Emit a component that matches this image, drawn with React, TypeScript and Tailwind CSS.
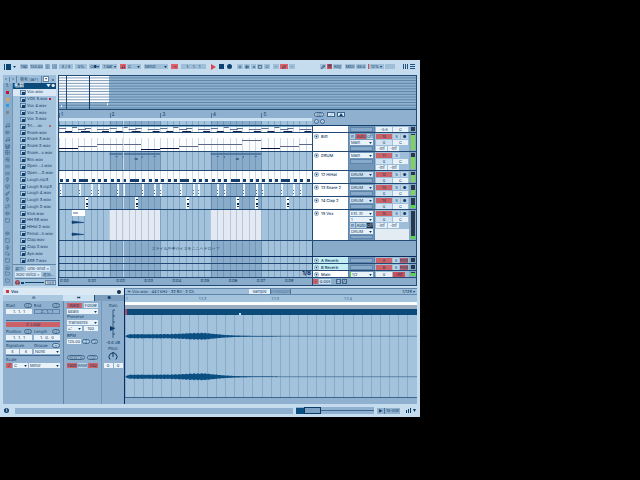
import type { ReactNode } from 'react';
import {
  AudioLines,
  Box,
  ChevronsLeft,
  Cloud,
  Drum,
  Folder,
  Grid2x2,
  Guitar,
  Headphones,
  Home,
  Mic,
  Music,
  Pencil,
  Plug,
  Plus,
  Repeat,
  SlidersHorizontal,
  Square,
  Waves,
} from 'lucide-react';
import clsx from 'clsx';
import { twMerge } from 'tailwind-merge';

const FILES = [
  'Vox.wav',
  'VOX 5.wav',
  'Vox 4.wav',
  'Vox 2.wav',
  'Vox 3.wav',
  'Tri... .av',
  'Snare.wav',
  'Snare 3.wav',
  'Snare 2.wav',
  'Snare...v.wav',
  'Rim.wav',
  'Open ...t.wav',
  'Open ...2.wav',
  'Laugh.mp3',
  'Laugh 5.mp3',
  'Laugh 4.wav',
  'Laugh 3.wav',
  'Laugh 2.wav',
  'Kick.wav',
  'HH SE.wav',
  'HiHat 2.wav',
  'Femal...h.wav',
  'Clap.wav',
  'Clap 2.wav',
  'Aye.wav',
  'ASE 7.wav',
];

const TAGS = ['bg-[#c8143c]', 'bg-[#e0a552]', 'bg-[#2f9bea]', 'bg-[#7c8794]'];

const RAIL_ICONS = [
  Music,
  AudioLines,
  Music,
  Drum,
  Grid2x2,
  SlidersHorizontal,
  Waves,
  Waves,
  Plug,
  Box,
  Guitar,
  Plug,
  Repeat,
  AudioLines,
  Square,
  null,
  AudioLines,
  Square,
  Mic,
  Cloud,
  Square,
  Home,
  Folder,
  Folder,
];

const BAR = 50.6;

const MELODY = [
  [0, 19, 15],
  [19, 19, 13],
  [38, 44, 11],
  [82, 19, 16],
  [101, 19, 15],
  [120, 19, 13],
  [139, 44, 11],
  [183, 19, 7],
  [202, 19, 15],
  [221, 19, 13],
  [240, 13, 11],
];

const CHORDS = [
  [0, 7, 2],
  [6, 7, 5],
  [13, 5, 1],
  [19, 8, 3],
  [22, 9, 5],
  [26, 6, 2],
  [38, 12, 3],
  [43, 7, 5],
];

const SNARES = [1, 20, 32, 39, 58, 64, 83, 95, 101, 121, 134, 139, 158, 165, 184, 197, 203, 222, 234, 241];
const CLAPS = [26, 76, 127, 177, 196, 227];

function Btn({ children, className, label }: { children?: ReactNode; className?: string; label?: string }) {
  return (
    <button
      type="button"
      aria-label={label}
      className={twMerge('flex h-[5px] min-w-0 items-center justify-center overflow-hidden whitespace-nowrap leading-none', className)}
    >
      {children}
    </button>
  );
}

function Pick({ value, label, className }: { value: string; label: string; className?: string }) {
  return (
    <div className={clsx('flex h-[5px] min-w-0 items-center pr-px', className)}>
      <select aria-label={label} className="h-[5px] min-w-0 flex-1 appearance-none pl-px leading-none outline-none">
        <option>{value}</option>
      </select>
      <svg viewBox="0 0 4 3" className="h-[2px] w-[3px] shrink-0" aria-hidden="true">
        <path d="M0 0h4L2 3z" fill="#0b3a66" />
      </svg>
    </div>
  );
}

function Field({ value, label, className }: { value: string; label: string; className?: string }) {
  return (
    <input
      aria-label={label}
      defaultValue={value}
      className={twMerge('h-[5px] min-w-0 bg-[#e9f2f9] text-center leading-none outline-none', className)}
    />
  );
}

function Lane({
  height,
  white,
  shade,
  children,
}: {
  height: number;
  white?: boolean;
  shade?: boolean;
  children?: ReactNode;
}) {
  return (
    <svg
      viewBox={`0 0 253 ${height}`}
      preserveAspectRatio="none"
      className={clsx('h-full w-full', white ? 'bg-[#fbfdff]' : 'bg-[#a3c2dc]')}
      aria-hidden="true"
    >
      {shade && (
        <>
          <rect x={BAR} width={BAR} height={height} fill="#8aaccb" />
          <rect x={BAR * 3} width={BAR} height={height} fill="#8aaccb" />
        </>
      )}
      {Array.from({ length: 40 }, (_, i) => (
        <rect
          key={i}
          x={Math.round((i * BAR) / 8)}
          width="1"
          height={height}
          fill="#4f7599"
          opacity={white ? 0.25 : i % 8 === 0 ? 0.6 : 0.4}
        />
      ))}
      {children}
      <rect x="64" width="1" height={height} fill="#d5e4f0" opacity="0.8" />
    </svg>
  );
}

function Toggle() {
  return (
    <svg viewBox="0 0 6 6" className="mt-px h-[5px] w-[5px] shrink-0" aria-hidden="true">
      <circle cx="3" cy="3" r="2.6" fill="#e3eff8" stroke="#4c7397" strokeWidth="0.6" />
      <path d="M1.6 2.2h2.8L3 4.4z" fill="#0b3a66" />
    </svg>
  );
}

function Track({
  name,
  height,
  lane,
  nameClass = 'bg-white',
  io,
  mix,
  level,
}: {
  name: string;
  height: string;
  lane: ReactNode;
  nameClass?: string;
  io: ReactNode;
  mix: ReactNode;
  level?: string;
}) {
  return (
    <div className={clsx('grid grid-cols-[1fr_36px_26px_35px_7px] border-b border-[#234a75]', height)}>
      <div className="min-h-0 overflow-hidden">{lane}</div>
      <div className={clsx('flex items-start gap-[2px] overflow-hidden border-l border-[#234a75] pl-px font-medium leading-[7px]', nameClass)}>
        {name && <Toggle />}
        <span className="whitespace-nowrap">{name}</span>
      </div>
      <div className="flex flex-col gap-px overflow-hidden border-l border-[#5f86aa] bg-[#7397b8] px-px pt-px">{io}</div>
      <div className="flex flex-col gap-px overflow-hidden border-l border-[#5f86aa] bg-[#9dbdd8] px-px pt-px">{mix}</div>
      <div className="flex justify-center bg-[#86a8c6] py-px">
        <div className="flex w-[4px] flex-col justify-end bg-[#26384a]">{level && <div className={level} />}</div>
      </div>
    </div>
  );
}

const blank = <div className="h-[5px] shrink-0 border border-[#5f86aa] bg-[#88aaca]" />;

function MixRows({ num, solo = true, rows = 2 }: { num: string; solo?: boolean; rows?: number }) {
  return (
    <>
      <div className="flex gap-px">
        <Btn className="w-[16px] bg-[#cd6168]">{num}</Btn>
        <Btn className="flex-1 bg-[#b9d3e8]">S</Btn>
        {solo ? <Btn className="flex-1 bg-[#b9d3e8]">●</Btn> : <div className="flex-1" />}
      </div>
      <div className="flex gap-px">
        <Field label={`Track ${num} volume`} value="0" className="w-[16px] bg-[#cfe2f1]" />
        <Field label={`Track ${num} pan`} value="C" className="flex-1" />
      </div>
      {rows > 2 && (
        <div className="flex gap-px">
          <Field label={`Track ${num} send A`} value="-inf" className="w-[11px]" />
          <Field label={`Track ${num} send B`} value="-inf" className="w-[11px]" />
        </div>
      )}
    </>
  );
}

function Toolbar() {
  const chip = 'bg-[#9fbfd9]';
  return (
    <header className="flex h-[14px] items-center pb-px pl-[4px] pr-[5px] text-[4px]">
      <svg viewBox="0 0 12 6" className="mr-[4px] h-[6px] w-[12px]" aria-hidden="true">
        <path d="M0 0h1v6H0zM2 0h5v6H2zM9 2h3l-1.500 2z" fill="#0b4373" />
      </svg>
      <div className="flex gap-[2px]">
        <Btn className={clsx('w-[8px]', chip)}>Tap</Btn>
        <Btn className={clsx('w-[13px]', chip)}>134.00</Btn>
        <Btn className={clsx('w-[5px]', chip)}>|||</Btn>
        <Btn className={clsx('w-[5px]', chip)}>||||</Btn>
        <Btn className={clsx('w-[14px]', chip)}>4 / 4</Btn>
        <Btn className={clsx('w-[12px]', chip)}>0%</Btn>
        <Btn className={clsx('w-[11px]', chip)}>O●▾</Btn>
        <Btn className={clsx('w-[15px]', chip)}>1 Bar ▾</Btn>
      </div>
      <div className="ml-[3px] flex">
        <Btn label="Scale" className="w-[6px] bg-[#e06068]">
          <Music size={4} />
        </Btn>
        <Pick label="Root note" value="C" className={clsx('ml-px w-[14px]', chip)} />
        <Pick label="Scale name" value="Minor" className={clsx('ml-[3px] w-[24px]', chip)} />
        <Btn label="Follow" className="ml-[3px] w-[7px] bg-[#e06068]">
          ⇥
        </Btn>
        <Field label="Song position" value="1.   1.   1" className="ml-[3px] w-[25px] bg-[#9fbfd9]" />
      </div>
      <div className="ml-[5px] flex items-center gap-[3px]">
        <button type="button" aria-label="Play">
          <svg viewBox="0 0 5 6" className="block h-[6px] w-[5px]">
            <path d="M0 0l5 3-5 3z" fill="#dd4650" />
          </svg>
        </button>
        <button type="button" aria-label="Stop" className="h-[5px] w-[5px] bg-[#0b4373]" />
        <button type="button" aria-label="Record" className="h-[5px] w-[5px] rounded-full bg-[#0b4373]" />
      </div>
      <div className="ml-[5px] flex gap-px">
        <Btn label="Overdub" className={clsx('w-[6px]', chip)}><Plus size={4} strokeWidth={3} /></Btn>
        <Btn label="Automation arm" className={clsx('w-[6px]', chip)}><AudioLines size={4} strokeWidth={3} /></Btn>
        <Btn label="Re-enable" className={clsx('w-[5px]', chip)}><ChevronsLeft size={4} strokeWidth={3} /></Btn>
        <Btn label="Capture" className={clsx('w-[6px]', chip)}><Square size={4} strokeWidth={3} /></Btn>
        <Btn label="Session record" className={clsx('w-[6px]', chip)}>○</Btn>
        <Btn label="Punch in" className={clsx('ml-[2px] w-[6px]', chip)}>⌐</Btn>
        <Btn label="Loop" className="w-[8px] bg-[#e06068]"><Repeat size={4} strokeWidth={3} /></Btn>
        <Btn label="Punch out" className={clsx('w-[6px]', chip)}>¬</Btn>
      </div>
      <div className="ml-auto flex items-center gap-px">
        <Btn label="Draw mode" className={clsx('w-[6px]', chip)}><Pencil size={4} strokeWidth={4} /></Btn>
        <Btn label="Computer keyboard" className="w-[5px] bg-[#d0525f]">▦</Btn>
        <Btn className={clsx('w-[9px]', chip)}>Key</Btn>
        <Btn className={clsx('ml-[2px] w-[10px]', chip)}>MIDI</Btn>
        <Btn className={clsx('w-[10px]', chip)}>48.0</Btn>
        <Btn className={clsx('ml-px w-[16px] border-l border-[#dd4650]', chip)}>12% ▾</Btn>
        <Btn label="Disk overload" className={clsx('w-[10px]', chip)} />
        <svg viewBox="0 0 12 5" className="ml-[7px] h-[5px] w-[12px]" aria-hidden="true">
          <path d="M.5 0v5M2.500 0v5M4.500 0v5M7 .5h5M7 2.500h5M7 4.500h5" stroke="#0b4373" strokeWidth="0.9" />
        </svg>
      </div>
    </header>
  );
}

function Browser() {
  return (
    <aside className="flex flex-col bg-[#a3c2dc]">
      <div className="flex h-[8px] items-center bg-[#9dbdd8] text-[5px]">
        <Btn label="Back" className="w-[6px]">‹</Btn>
        <Btn label="Forward" className="w-[7px] border-l border-[#5f86aa]">›</Btn>
        <input
          aria-label="検索"
          placeholder="検索 (⌘F)"
          className="h-[7px] min-w-0 flex-1 border-x border-[#5f86aa] pl-[3px] text-[4px] leading-none placeholder:text-[#2b557f]"
        />
        <Btn label="Filter" className="mx-px h-[6px] w-[6px] border border-[#5f86aa] bg-white text-[4px]">▾</Btn>
        <Btn className="w-[6px]">×</Btn>
      </div>
      <div className="flex flex-1">
        <nav className="w-[10px] border-r border-[#7396b7] bg-[#8aaccb]">
          <div className="h-[6px] text-center text-[5px] leading-[6px]">1.</div>
          <div className="grid h-[195px] auto-rows-fr">
            {TAGS.map((tag) => (
              <button key={tag} type="button" aria-label="Collection" className="grid place-items-center">
                <span className={clsx('h-[3px] w-[3px]', tag)} />
              </button>
            ))}
            <span />
            {RAIL_ICONS.map((Icon, i) => (
              <button key={i} type="button" aria-label={`Category ${i + 1}`} className="grid place-items-center text-[#2b557f]">
                {Icon && <Icon size={5} strokeWidth={2} />}
              </button>
            ))}
          </div>
        </nav>
        <div className="min-w-0 flex-1">
          <div className="flex h-[6px] items-center justify-between bg-[#0b4a79] px-px text-[5px] font-bold text-[#e9f2f9]">
            <span>名前</span>
            <span className="text-[4px]">▼ ●</span>
          </div>
          <ul className="grid h-[175px] auto-rows-fr">
            {FILES.map((file, i) => (
              <li
                key={file}
                className={clsx('flex items-center gap-px overflow-hidden pl-[7px] text-[4px]', i === 0 && 'bg-[#d9e8f4]')}
              >
                <svg viewBox="0 0 6 5" className="h-[5px] w-[6px] shrink-0" aria-hidden="true">
                  <rect x="0.400" y="0.400" width="5.200" height="4" fill="#b9d1e6" stroke="#36638f" strokeWidth="0.700" />
                  <path d="M2 2h3v3H2z" fill="#123f6b" />
                </svg>
                <span className="flex-1 whitespace-nowrap">{file}</span>
                {(i === 1 || i === 5) && (
                  <span className={clsx('mr-[5px] h-[2px] w-[2px]', i === 1 ? 'bg-[#c8143c]' : 'bg-[#a3707f]')} />
                )}
              </li>
            ))}
          </ul>
          <div className="flex flex-col gap-px border-t border-[#5f86aa] pl-[2px] pt-px text-[4px]">
            <div className="flex items-center gap-[2px]">
              <span>並び:</span>
              <Btn className="bg-[#d9e8f4] px-px">One-Shot ×</Btn>
            </div>
            <div className="flex items-center gap-[2px]">
              <Btn className="bg-[#d9e8f4] px-px">Solo Voice ×</Btn>
              <span className="whitespace-nowrap">追加...</span>
            </div>
            <div className="flex items-center gap-px border-t border-[#5f86aa] pt-px">
              <Headphones size={5} className="shrink-0 rounded-full bg-[#cd6168]" />
              <span className="h-[2px] w-[3px] bg-[#0b4373]" />
              <span className="h-px flex-1 bg-[#0b4373]" />
              <Btn className="w-[11px] border border-[#5f86aa] bg-[#e9f2f9]">Raw</Btn>
            </div>
          </div>
        </div>
      </div>
    </aside>
  );
}

function Overview() {
  return (
    <svg viewBox="0 0 357 35" preserveAspectRatio="none" className="h-[35px] w-full border-y border-[#234a75] bg-[#8fb2cf]" aria-hidden="true">
      <rect width="50" height="28" fill="#fbfdff" />
      {Array.from({ length: 12 }, (_, i) => (
        <rect key={i} y={i * 2.900 + 1.500} width="357" height="1" fill="#466e95" opacity="0.7" />
      ))}
      <rect x="7" width="1" height="35" fill="#234a75" />
      <rect x="30" width="1" height="35" fill="#12396a" />
      <rect x="2" y="31" width="1" height="2" fill="#fff" />
      <rect x="48" y="29" width="1" height="2" fill="#fff" />
    </svg>
  );
}

function Ruler() {
  return (
    <div className="grid grid-cols-[1fr_104px] border-b border-[#123f6b] bg-[#8fb0ce] text-[5px]">
      <div>
        <div className="grid h-[8px] grid-cols-5 items-end">
          {[1, 2, 3, 4, 5].map((n) => (
            <span key={n} className="border-l border-[#4f7599] pl-px leading-none">{n}</span>
          ))}
        </div>
        <div className="h-[3px] bg-[#c9e1f2]" />
        <div className="h-[4px]">
          <Lane height={4} shade />
        </div>
      </div>
      <div className="flex flex-col gap-[2px] pl-[2px] pt-[2px] text-[4px]">
        <div className="flex gap-[3px]">
          <Btn className="w-[10px] rounded-full border border-[#3d678f] bg-[#c9deee]">Set</Btn>
          <Btn label="Automation mode" className="w-[8px] border border-[#3d678f] bg-[#d9e8f4]">⟋</Btn>
          <Btn label="Lock envelopes" className="-ml-px w-[8px] border border-[#3d678f] bg-[#d9e8f4]">▲</Btn>
        </div>
        <div className="flex gap-px">
          <Btn label="Previous locator" className="w-[5px] rounded-full border border-[#3d678f] bg-[#c9deee]">‹</Btn>
          <Btn label="Next locator" className="w-[5px] rounded-full border border-[#3d678f] bg-[#c9deee]">›</Btn>
        </div>
      </div>
    </div>
  );
}

function ReturnMix({ letter }: { letter: string }) {
  return (
    <div className="flex gap-px">
      <Btn className="w-[16px] bg-[#cd6168]">{letter}</Btn>
      <Btn className="w-[6px] bg-[#b9d3e8]">S</Btn>
      <Btn className="flex-1 bg-[#b8636f]">Post</Btn>
    </div>
  );
}

function Arrangement() {
  return (
    <main className="flex min-w-0 flex-col border-x border-b border-[#234a75] bg-[#8fb0ce] text-[4px]">
      <Overview />
      <Ruler />
      <Track
        name=""
        height="h-[7px]"
        io={blank}
        mix={
          <div className="flex gap-px">
            <Field label="Volume" value="-5.6" className="w-[16px]" />
            <Field label="Pan" value="C" className="flex-1" />
          </div>
        }
        lane={
          <Lane height={6} white>
            <rect width="253" height="1" fill="#7fb1d0" />
            {[0, 1, 2, 3, 4].map((bar) =>
              CHORDS.map(([x, w, y]) => (
                <rect key={`${bar}-${x}`} x={bar * BAR + x} y={y} width={w} height="1" fill={y > 4 ? '#10204f' : '#5f6f8d'} />
              )),
            )}
          </Lane>
        }
      />
      <Track
        name="BIG"
        height="h-[19px]"
        level="h-[15px] bg-[#7fd35b]"
        io={
          <>
            <div className="flex gap-px">
              <Btn className="w-[5px] bg-[#b9d3e8]">In</Btn>
              <Btn className="flex-1 bg-[#cd6168]">Auto</Btn>
              <Btn className="w-[6px] bg-[#b9d3e8]">Off</Btn>
            </div>
            <Pick label="BIG output" value="Main" className="bg-[#e9f2f9]" />
            {blank}
          </>
        }
        mix={<MixRows num="10" rows={3} />}
        lane={
          <Lane height={18} white>
            <rect width="253" height="5" fill="#fff" />
            {MELODY.map(([x, w, y]) => (
              <rect key={x} x={x} y={y} width={w} height="1" fill={y > 14 ? '#0a1440' : '#5c6885'} />
            ))}
          </Lane>
        }
      />
      <Track
        name="DRUM"
        height="h-[19px]"
        level="h-[12px] bg-[#7fd35b]"
        io={
          <>
            <Pick label="DRUM output" value="Main" className="bg-[#e9f2f9]" />
            {blank}
          </>
        }
        mix={<MixRows num="11" solo={false} rows={3} />}
        lane={
          <Lane height={18} shade>
            {[1, 3].map((bar) => (
              <g key={bar} fill="#3f6b93">
                <rect x={bar * BAR} y="1" width={BAR} height="2" opacity="0.700" />
                <path d={`M${bar * BAR + 6} 4h2v1h-2zM${bar * BAR + 13} 4h1v2h-1zM${bar * BAR + 25} 6h3v2h-3zM${bar * BAR + 32} 4h1v2h-1zM${bar * BAR + 44} 4h2v1h-2z`} />
              </g>
            ))}
          </Lane>
        }
      />
      <Track
        name="12 HiHat"
        height="h-[13px]"
        level="h-[7px] bg-[#7fd35b]"
        io={
          <>
            <Pick label="HiHat output" value="DRUM" className="bg-[#cfe0ee]" />
            {blank}
          </>
        }
        mix={<MixRows num="12" />}
        lane={
          <Lane height={12} white>
            {Array.from({ length: 40 }, (_, i) =>
              i % 8 === 4 ? null : (
                <rect key={i} x={Math.round((i * BAR) / 8) + 1} y="8" width={i % 8 === 3 ? 9 : 3} height="3" fill="#143f6c" />
              ),
            )}
          </Lane>
        }
      />
      <Track
        name="13 Snare 2"
        height="h-[13px]"
        level="h-[5px] bg-[#7fd35b]"
        io={
          <>
            <Pick label="Snare output" value="DRUM" className="bg-[#cfe0ee]" />
            {blank}
          </>
        }
        mix={<MixRows num="13" />}
        lane={
          <Lane height={12} shade>
            {SNARES.map((x) => (
              <g key={x}>
                <rect x={x} width="2" height="12" fill="#eef5fa" />
                <path d={`M${x} 6h1v1h-1zM${x} 9h1v1h-1z`} fill="#3f6b93" />
              </g>
            ))}
          </Lane>
        }
      />
      <Track
        name="14 Clap 2"
        height="h-[13px]"
        level="h-[3px] bg-[#4fdc3b]"
        io={
          <>
            <Pick label="Clap output" value="DRUM" className="bg-[#cfe0ee]" />
            {blank}
          </>
        }
        mix={<MixRows num="14" />}
        lane={
          <Lane height={12} shade>
            {CLAPS.map((x) => (
              <g key={x}>
                <rect x={x} width="3" height="12" fill="#fbfdff" />
                <path d={`M${x + 1} 2h2v1h-2zM${x + 1} 6h2v2h-2zM${x + 1} 9h2v1h-2z`} fill="#0b2c52" />
              </g>
            ))}
          </Lane>
        }
      />
      <Track
        name="15 Vox"
        height="h-[31px]"
        level="h-[3px] bg-[#4fdc3b]"
        io={
          <>
            <Pick label="Vox input" value="Ext. In" className="bg-[#e9f2f9]" />
            <Pick label="Vox channel" value="1" className="bg-[#e9f2f9]" />
            <div className="flex gap-px">
              <Btn className="w-[5px] bg-[#b9d3e8]">In</Btn>
              <Btn className="flex-1 bg-[#b9d3e8]">Auto</Btn>
              <Btn className="w-[6px] bg-[#1e2c3c] text-[#b9d3e8]">Off</Btn>
            </div>
            <Pick label="Vox output" value="DRUM" className="bg-[#e9f2f9]" />
            <div className="h-[4px] border border-[#5f86aa] bg-[#88aaca]" />
          </>
        }
        mix={
          <>
            <MixRows num="15" rows={3} />
            <div className="-mx-px flex-1 bg-[#e3ebf3]" />
          </>
        }
        lane={
          <Lane height={30} shade>
            {[1, 3].map((bar) => (
              <g key={bar}>
                <rect x={bar * BAR} width={BAR} height="30" fill="#e3eaf3" />
                {[1, 2, 3, 4, 5, 6, 7].map((i) => (
                  <rect key={i} x={Math.round(bar * BAR + (i * BAR) / 8)} width="1" height="30" fill="#b9c7d8" />
                ))}
              </g>
            ))}
            <rect x="13" width="13" height="6" fill="#fff" />
            <path d="M14 3h5" stroke="#4c7397" />
            <path d="M13 11l4 .5 8 1-8 .5-4 .5zM13 23l4 .5 8 1-8 .5-4 .5z" fill="#0b3f72" stroke="#0b3f72" strokeWidth="0.500" />
          </Lane>
        }
      />
      <div className="grid h-[16px] grid-cols-[1fr_104px] border-b border-[#0b2c62]">
        <div className="relative">
          <Lane height={15} shade />
          <span className="absolute inset-0 flex items-center justify-center text-[4px]">
            ファイルやデバイスをここへドロップ
          </span>
        </div>
        <div className="border-l border-[#234a75] bg-[#8aaccb]" />
      </div>
      <Track
        name="A Reverb"
        height="h-[7px]"
        nameClass="bg-[#c3eef3]"
        io={blank}
        mix={<ReturnMix letter="A" />}
        lane={<Lane height={6} shade />}
      />
      <Track
        name="B Reverb"
        height="h-[7px]"
        nameClass="bg-[#c3eef3]"
        io={blank}
        mix={<ReturnMix letter="B" />}
        lane={<Lane height={6} shade />}
      />
      <Track
        name="Main"
        height="h-[7px]"
        level="h-[3px] bg-[#4fdc3b]"
        io={<Pick label="Main output" value="1/2" className="border-l border-[#4fdc3b] bg-[#e9f2f9]" />}
        mix={
          <div className="flex gap-px">
            <Field label="Main pan" value="0" className="w-[16px]" />
            <Btn className="w-[12px] bg-[#cd4f58]">-inf</Btn>
          </div>
        }
        lane={
          <div className="relative h-full">
            <Lane height={6} shade />
            <span className="absolute bottom-0 right-px text-[6px] font-bold leading-[6px] text-[#0a1f5c]">1/8</span>
          </div>
        }
      />
      <div className="grid h-[7px] grid-cols-[1fr_104px] bg-[#8aaccb]">
        <div className="grid grid-cols-9 text-[4px] leading-[6px]">
          {[0, 1, 2, 3, 4, 5, 6, 7, 8].map((s) => (
            <span key={s} className="pl-px">0:0{s}</span>
          ))}
        </div>
        <div className="flex items-center gap-px border-l border-[#234a75]">
          <Btn label="Arrangement follow" className="w-[5px] bg-[#cd6168]">◦</Btn>
          <Btn className="w-[12px] bg-[#c9deee]">0.00s</Btn>
          <Btn className="ml-[4px] w-[5px] border border-[#3d678f] bg-[#c9deee]">H</Btn>
          <Btn className="w-[5px] border border-[#3d678f] bg-[#c9deee]">W</Btn>
        </div>
      </div>
    </main>
  );
}

function Pair({ left, right }: { left: string; right: string }) {
  return (
    <div className="grid grid-cols-2 gap-[2px]">
      {[left, right].map((text) => (
        <div key={text} className="flex items-center justify-between">
          <span>{text}</span>
          <Btn className="w-[8px] rounded-full border border-[#3d678f] bg-[#b9d3e8]">Set</Btn>
        </div>
      ))}
    </div>
  );
}

function ClipPanel() {
  return (
    <section className="flex flex-col bg-[#8fb0ce] text-[4px]">
      <div className="flex h-[7px] items-center gap-[2px] bg-[#dbe9f4] px-[3px]">
        <span className="h-[3px] w-[3px] bg-[#d4353f]" />
        <span className="flex-1 font-semibold">Vox</span>
        <span className="h-[4px] w-[4px] rounded-full bg-[#12304f]" />
      </div>
      <div className="grid h-[6px] grid-cols-[60px_31px_1fr]">
        <Btn label="Clip tab" className="h-full bg-[#a9c8e0]">⊟</Btn>
        <Btn label="Sample tab" className="h-full bg-[#cfe2f1]">↦</Btn>
        <Btn label="Automation tab" className="h-full border-l border-[#234a75] bg-[#7d9fbf]">●.</Btn>
      </div>
      <div className="grid flex-1 grid-cols-[61px_37px_1fr]">
        <div className="flex flex-col gap-px border-r border-[#5f86aa] pl-[3px] pr-[3px] pt-[2px]">
          <Pair left="Start" right="End" />
          <div className="grid grid-cols-2 gap-[2px]">
            <Field label="Start" value="1.  1.  1" />
            <Field label="End" value="2.  1.  1" className="border border-[#5f86aa] bg-[#8fb0ce]" />
          </div>
          <hr className="mt-[5px] border-[#3d678f]" />
          <Btn className="bg-[#cd6168]">↻ Loop</Btn>
          <div className="mt-px">
            <Pair left="Position" right="Length" />
          </div>
          <div className="grid grid-cols-2 gap-[2px]">
            <Field label="Position" value="1.  1.  1" />
            <Field label="Length" value="1.  0.  0" />
          </div>
          <hr className="border-[#3d678f]" />
          <div className="grid grid-cols-2 gap-[2px]">
            <span className="leading-[5px]">Signature</span>
            <div className="flex items-center justify-between">
              <span>Groove</span>
              <Btn label="Commit groove" className="w-[8px] rounded-full border border-[#3d678f] bg-[#b9d3e8]">‹›</Btn>
            </div>
          </div>
          <div className="grid grid-cols-2 gap-[2px]">
            <div className="flex gap-px">
              <Field label="Numerator" value="4" className="flex-1" />
              <Field label="Denominator" value="4" className="flex-1" />
            </div>
            <Pick label="Groove" value="None" className="bg-[#e9f2f9]" />
          </div>
          <hr className="border-[#3d678f]" />
          <span className="leading-[5px]">Scale</span>
          <div className="flex gap-px">
            <Btn label="Scale" className="w-[6px] bg-[#cd6168]">♪</Btn>
            <Pick label="Root" value="C" className="w-[15px] bg-[#e9f2f9]" />
            <Pick label="Mode" value="Minor" className="flex-1 bg-[#e9f2f9]" />
          </div>
        </div>
        <div className="flex flex-col gap-px pl-[3px] pr-[3px] pt-[2px]">
          <div className="grid grid-cols-2 gap-[2px]">
            <Btn className="bg-[#cd6168]">Warp</Btn>
            <Btn className="bg-[#d9e8f4]">Follow</Btn>
          </div>
          <Pick label="Warp mode" value="Beats" className="bg-[#e9f2f9]" />
          <span className="leading-[4px]">Preserve</span>
          <Pick label="Preserve" value="Transients" className="bg-[#e9f2f9]" />
          <div className="grid grid-cols-2 gap-[2px]">
            <Pick label="Loop mode" value="⇄" className="bg-[#e9f2f9]" />
            <Field label="Envelope" value="100" />
          </div>
          <span className="mt-[2px] leading-[4px]">BPM</span>
          <div className="flex gap-px">
            <Field label="BPM" value="125.00" className="w-[14px]" />
            <Btn className="flex-1 rounded-full border border-[#3d678f] bg-[#b9d3e8]">:2</Btn>
            <Btn className="flex-1 rounded-full border border-[#3d678f] bg-[#b9d3e8]">*2</Btn>
          </div>
          <div className="mt-[10px] flex gap-[2px]">
            <Btn className="w-[18px] rounded-full border border-[#3d678f] bg-[#b9d3e8]">Reverse</Btn>
            <Btn className="flex-1 rounded-full border border-[#3d678f] bg-[#b9d3e8]">Edit</Btn>
          </div>
          <div className="mt-[2px] grid grid-cols-3 gap-px">
            <Btn className="bg-[#cd6168]">Fade</Btn>
            <Btn className="bg-[#b9d3e8]">RAM</Btn>
            <Btn className="bg-[#cd6168]">HiQ</Btn>
          </div>
        </div>
        <div className="flex flex-col items-center border-l border-[#7396b7] pt-[2px]">
          <span className="leading-[5px]">Gain</span>
          <svg viewBox="0 0 16 32" className="h-[32px] w-[16px]" aria-hidden="true">
            <path d="M8 2v28M8 2h2M8 8h2M8 14h2M8 20h2M8 26h2" stroke="#1d4670" strokeWidth="0.800" />
            <path d="M5 18l5 2.500-5 2.500z" fill="#0b3a66" />
          </svg>
          <span className="whitespace-nowrap leading-[5px]">-0.0 dB</span>
          <span className="mt-px leading-[5px]">Pitch</span>
          <svg viewBox="0 0 10 10" className="h-[10px] w-[10px]" aria-hidden="true">
            <path d="M2 8.500a4 4 0 1 1 6 0M5 1v5" fill="none" stroke="#0b3a66" strokeWidth="1" />
          </svg>
          <div className="mt-[2px] flex gap-px">
            <Field label="Semitones" value="0" className="w-[9px]" />
            <Field label="Cents" value="0" className="w-[9px]" />
          </div>
        </div>
      </div>
    </section>
  );
}

// Upper and lower outline of one audio channel, decaying from the left edge.
function channel(mid: number) {
  const top: string[] = [];
  const bottom: string[] = [];
  for (let x = 1; x <= 170; x += 1) {
    const swell = Math.exp(-((x - 76) ** 2) / 500);
    const body = x < 80 ? 1.9 : 1.9 * Math.exp(-(x - 80) / 26);
    const amp = Math.min(x / 2, body + swell * 1.2) * (0.85 + 0.3 * Math.abs(Math.sin(x * 2.3)));
    top.push(`${x} ${(mid - amp).toFixed(2)}`);
    bottom.unshift(`${x} ${(mid + amp).toFixed(2)}`);
  }
  return `M${top.join('L')}L${bottom.join('L')}Z`;
}

function SampleView() {
  return (
    <section className="flex min-w-0 flex-col border-l border-[#0b2c62] bg-[#8fb0ce] text-[4px]">
      <div className="flex h-[7px] items-center border-y border-[#5f86aa] bg-[#9dbdd8]">
        <div className="flex-1 pl-[2px]">▣ Vox.wav · 44.1 kHz · 32 Bit · 2 Ch</div>
        <Btn className="w-[21px] bg-[#e3effa]">Sample</Btn>
        <Btn className="w-[21px] border-x border-[#4f7599] bg-[#8aaccb] text-[#4f7599]">Envelopes</Btn>
        <div className="w-[126px] pr-[2px] text-right">1/128 ▾</div>
      </div>
      <div className="grid h-[7px] grid-cols-4 items-center bg-[#a3c2dc] pl-px text-[#44709a]">
        {['1', '1.1.2', '1.1.3', '1.1.4'].map((t) => (
          <span key={t}>{t}</span>
        ))}
      </div>
      <div className="h-[3px] bg-[#fbfdff]" />
      <div className="h-[4px] bg-[#9aaebf]" />
      <div className="flex h-[6px] bg-[#0b4a79]">
        <span className="w-[2px] bg-[#b04a68]" />
        <span className="ml-[112px] mt-[4px] h-[2px] w-[2px] bg-[#c9deee]" />
      </div>
      <svg viewBox="0 0 292 83" preserveAspectRatio="none" className="h-[83px] w-full border-b border-[#3d678f] bg-[#a3c2dc]" aria-hidden="true">
        {Array.from({ length: 32 }, (_, i) => (
          <rect key={i} x={Math.round(i * 9.100)} width="1" height="83" fill="#6288ac" opacity="0.400" />
        ))}
        <path d="M0 21.500h292M0 62.500h292" stroke="#3d678f" strokeWidth="0.700" />
        <path d={channel(21.5)} fill="#0b4f82" />
        <path d={channel(62.5)} fill="#0b4f82" />
      </svg>
      <div className="h-[6px]" />
    </section>
  );
}

function StatusBar() {
  return (
    <footer className="flex h-[13px] items-center pl-[4px] pr-[4px] text-[4px]">
      <Btn label="Info" className="h-[5px] w-[5px] rounded-full bg-[#0b3a66] font-bold text-white">i</Btn>
      <div className="ml-[6px] h-[6px] flex-1 bg-[#8fb0ce]" />
      <div className="ml-[3px] flex h-[7px] w-[78px] items-center bg-[#8fb0ce]">
        <span className="h-[6px] w-[8px] bg-[#0b4f82]" />
        <span className="h-[7px] w-[17px] border border-[#0b3a66] bg-[#7da2c3]" />
        <span className="h-px flex-1 bg-[#3d678f]" />
      </div>
      <div className="ml-[3px] flex h-[6px]">
        <Btn label="Show device view" className="h-full w-[7px] bg-[#8fb0ce]">▶</Btn>
        <Btn className="h-full w-[16px] border-l border-[#4f7599] bg-[#8fb0ce]">15-Vox</Btn>
      </div>
      <svg viewBox="0 0 10 5" className="ml-[6px] h-[5px] w-[10px]" aria-hidden="true">
        <path d="M0 2h1v3H0zM2 1h1v4H2zM4 0h1v5H4zM7 1h3L8.500 4z" fill="#0b3a66" />
      </svg>
    </footer>
  );
}

export default function App() {
  return (
    <div className="min-h-screen bg-black pt-[60px] font-['Inter','Noto_Sans_CJK_JP',sans-serif] leading-none text-[#123c66] [text-rendering:geometricPrecision]">
      <div className="grid grid-cols-[21fr_11fr]">
        <div className="min-w-0 bg-[#c5dcee]">
          <Toolbar />
          <div className="grid grid-cols-[53px_1fr] gap-[2px] px-[3px] pt-px">
            <Browser />
            <Arrangement />
          </div>
          <div className="grid grid-cols-[121px_1fr] px-[3px] pt-[2px]">
            <ClipPanel />
            <SampleView />
          </div>
          <StatusBar />
        </div>
      </div>
    </div>
  );
}
